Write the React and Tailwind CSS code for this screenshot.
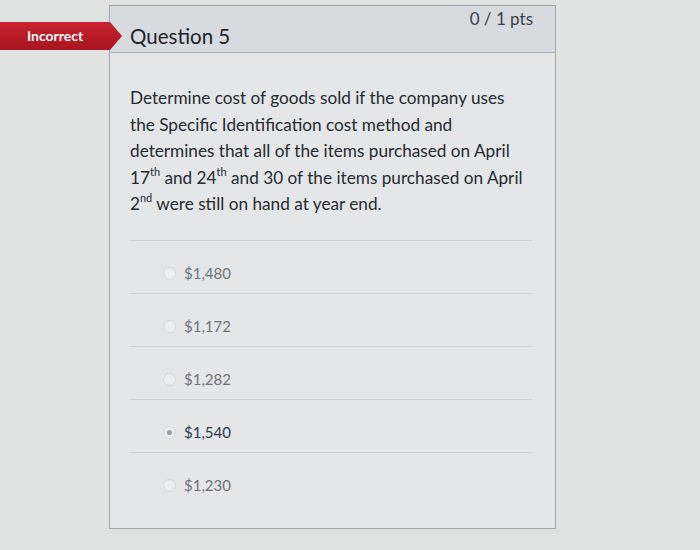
const answers = [
  { label: '$1,480' },
  { label: '$1,172' },
  { label: '$1,282' },
  { label: '$1,540', selected: true },
  { label: '$1,230' },
]

const Sup = ({ children }) => (
  <span className="inline-block align-top mt-[1px] text-[11px] leading-[11px]">{children}</span>
)

const Answer = ({ label, selected, last }) => (
  <div className={`flex items-start h-[53px] pt-[23px] pl-[33px] ${last ? '' : 'border-b border-[#cfd2d5]'}`}>
    <span className="w-[13px] h-[13px] rounded-full border border-[#d4d6d8] bg-[#eceeef] flex items-center justify-center mt-[3px]">
      {selected && <span className="w-[5px] h-[5px] rounded-full bg-[#9a9ea2]" />}
    </span>
    <span className={`ml-[8px] text-[15px] leading-[18px] ${selected ? 'text-[#2d3b45]' : 'text-[#6f7376]'}`}>
      {label}
    </span>
  </div>
)

const App = () => {
  return (
    <div className="relative w-[700px] h-[550px] overflow-hidden bg-[#e0e1e1] pt-[5px] font-['Lato','Noto_Sans',sans-serif]">
      <div className="ml-[109px] w-[447px] h-[524px] border border-[#a3a7ab] bg-[#e4e6e8] flex flex-col">
        <div className="h-[47px] bg-[#d7dade] border-b border-[#a9adb1] flex justify-between">
          <div className="pl-[20px] pt-[18px] text-[20.5px] leading-[24px] text-[#1f2327]">Question 5</div>
          <div className="pr-[22px] pt-[3px] text-[17px] leading-[20px] text-[#3a3f44]">0 / 1 pts</div>
        </div>
        <div className="px-[20px]">
          <p className="w-[397px] mt-[32px] text-[17.2px] leading-[26.5px] text-[#262b30]">
            Determine cost of goods sold if the company uses the Specific Identification cost method and determines that all of the items purchased on April 17<Sup>th</Sup> and 24<Sup>th</Sup> and 30 of the items purchased on April 2<Sup>nd</Sup> were still on hand at year end.
          </p>
          <div className="mt-[22px] w-[402px] border-t border-[#cfd2d5]">
            {answers.map((a, i) => (
              <Answer key={a.label} {...a} last={i === answers.length - 1} />
            ))}
          </div>
        </div>
      </div>
      <div className="absolute left-0 top-[22px] h-[28px] w-[122px] bg-gradient-to-b from-[#c8232d] to-[#a8151f] [clip-path:polygon(0_0,110px_0,100%_50%,110px_100%,0_100%)] flex items-center pl-[27px]">
        <span className="text-white font-bold text-[14px] leading-none">Incorrect</span>
      </div>
    </div>
  )
}

export default App
